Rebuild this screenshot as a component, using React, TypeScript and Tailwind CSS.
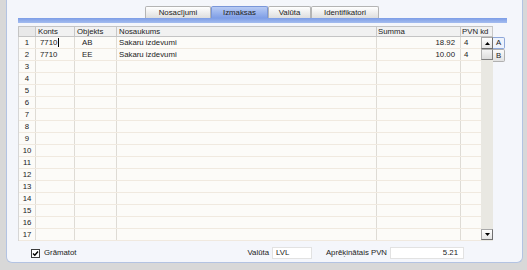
import React from "react";

type Row = { konts: string; obj: string; nos: string; sum: string; pvn: string };
const data: Record<number, Row> = {
  1: { konts: "7710", obj: "AB", nos: "Sakaru izdevumi", sum: "18.92", pvn: "4" },
  2: { konts: "7710", obj: "EE", nos: "Sakaru izdevumi", sum: "10.00", pvn: "4" },
};
const rows = Array.from({ length: 17 }, (_, i) => i + 1);

function Tab({ label, w, active }: { label: string; w: string; active?: boolean }) {
  return (
    <div
      className={
        w +
        " h-[12px] flex items-center justify-center border border-b-0 rounded-t-[2px] " +
        (active
          ? "bg-gradient-to-b from-[#b8cbf4] to-[#7f9ee6] border-[#7a96d8]"
          : "bg-gradient-to-b from-[#ffffff] to-[#dedede] border-[#b4b4b4]")
      }
    >
      {label}
    </div>
  );
}

function Arrow({ up }: { up?: boolean }) {
  return (
    <svg width="5" height="3" viewBox="0 0 5 3">
      {up ? <polygon points="0,3 5,3 2.5,0" fill="#000" /> : <polygon points="0,0 5,0 2.5,3" fill="#000" />}
    </svg>
  );
}

export default function App() {
  return (
    <div
      className="w-[527px] h-[270px] bg-[#d8d8d8] overflow-hidden text-[7.8px] leading-none text-[#222]"
      style={{ fontFamily: '"Liberation Sans", Arial, sans-serif' }}
    >
      <div className="ml-[6px] w-[517px] h-[263px] bg-[#f4f6fb] border-l border-r border-b border-[#b3c3e2] rounded-b-[6px]">
        <div className="ml-[11px] w-[489px] pt-[6px]">
          {/* tabs */}
          <div className="flex pl-[127px]">
            <Tab label="Nosacījumi" w="w-[66px]" />
            <Tab label="Izmaksas" w="w-[57px]" active />
            <Tab label="Valūta" w="w-[43px]" />
            <Tab label="Identifikatori" w="w-[68px]" />
          </div>
          <div className="h-[5px] w-[489px] bg-gradient-to-b from-[#7d9de6] to-[#a4bcef]" />
          {/* table */}
          <div className="mt-[3px] w-[489px]">
            <div className="flex w-[475px] h-[11px] bg-[#f1f1f1] border-t border-b border-[#c4c4c4] border-l">
              <div className="w-[17px] shrink-0 border-r border-[#c8c8c8] bg-[#e9e9e9]" />
              <div className="w-[39px] shrink-0 border-r border-[#c8c8c8] pl-[2px] flex items-center">Konts</div>
              <div className="w-[42px] shrink-0 border-r border-[#c8c8c8] pl-[2px] flex items-center">Objekts</div>
              <div className="w-[260px] shrink-0 border-r border-[#c8c8c8] pl-[2px] flex items-center">Nosaukums</div>
              <div className="w-[84px] shrink-0 border-r border-[#c8c8c8] pl-[1px] flex items-center">Summa</div>
              <div className="flex-1 border-r border-[#c8c8c8] pl-[1px] flex items-center whitespace-nowrap">PVN kd</div>
            </div>
            <div className="flex">
              <div className="w-[463px] shrink-0 bg-[#fcfbf8] border-l border-[#d6d6d6]">
                {rows.map((n) => {
                  const r = data[n];
                  return (
                    <div key={n} className="flex h-[12px] border-b border-[#f0e9df]">
                      <div className="w-[17px] shrink-0 border-r border-[#dedbd5] flex items-center justify-center">{n}</div>
                      <div className="w-[39px] shrink-0 border-r border-[#dedbd5] pl-[4px] flex items-center">
                        {r ? r.konts : ""}
                        {n === 1 && <span className="ml-[1px] w-[1px] h-[9px] bg-black" />}
                      </div>
                      <div className="w-[42px] shrink-0 border-r border-[#dedbd5] pl-[7px] flex items-center">{r ? r.obj : ""}</div>
                      <div className="w-[260px] shrink-0 border-r border-[#dedbd5] pl-[2px] flex items-center">{r ? r.nos : ""}</div>
                      <div className="w-[84px] shrink-0 border-r border-[#dedbd5] pr-[5px] flex items-center justify-end">{r ? r.sum : ""}</div>
                      <div className="flex-1 pl-[3px] flex items-center">{r ? r.pvn : ""}</div>
                    </div>
                  );
                })}
              </div>
              {/* scrollbar */}
              <div className="w-[12px] shrink-0 h-[204px] bg-[#e9e8e2] flex flex-col">
                <div className="h-[12px] bg-gradient-to-b from-[#ffffff] to-[#e4e4e4] border border-[#a8a8a8] border-b-[#707070] border-r-[#707070] flex items-center justify-center">
                  <Arrow up />
                </div>
                <div className="h-[11px] bg-gradient-to-b from-[#f4f4f4] to-[#dcdcdc] border border-[#b0b0b0] border-b-[#808080] border-r-[#808080]" />
                <div className="flex-1" />
                <div className="h-[11px] mb-[1px] bg-gradient-to-b from-[#ffffff] to-[#e4e4e4] border border-[#a8a8a8] border-b-[#707070] border-r-[#707070] flex items-center justify-center">
                  <Arrow />
                </div>
              </div>
              {/* side tabs */}
              <div className="w-[12px] shrink-0 flex flex-col">
                <div className="h-[12px] bg-[#eef3fc] border border-l-0 border-[#8ea7d9] rounded-r-[2px] flex items-center justify-center">A</div>
                <div className="h-[13px] bg-gradient-to-b from-[#fbfbfb] to-[#e2e2e2] border border-l-0 border-[#b0b0b0] rounded-r-[2px] flex items-center justify-center">B</div>
              </div>
            </div>
          </div>
          {/* bottom */}
          <div className="flex items-center h-[12px] mt-[6px]">
            <div className="w-[227px] flex items-center pl-[13px]">
              <div className="w-[9px] h-[9px] bg-white border border-[#3c3c3c] flex items-center justify-center">
                <svg width="7" height="7" viewBox="0 0 7 7">
                  <polyline points="1,3.5 2.8,5.3 6,1.5" fill="none" stroke="#000" strokeWidth="1.4" />
                </svg>
              </div>
              <span className="ml-[4px]">Grāmatot</span>
            </div>
            <div className="w-[24px] text-right">Valūta</div>
            <div className="ml-[3px] w-[40px] h-[12px] bg-white border border-[#e2e2e2] pl-[3px] flex items-center">LVL</div>
            <div className="w-[75px] text-right">Aprēķinātais PVN</div>
            <div className="ml-[3px] w-[74px] h-[12px] bg-white border border-[#e2e2e2] pr-[5px] flex items-center justify-end">5.21</div>
          </div>
        </div>
      </div>
    </div>
  );
}
